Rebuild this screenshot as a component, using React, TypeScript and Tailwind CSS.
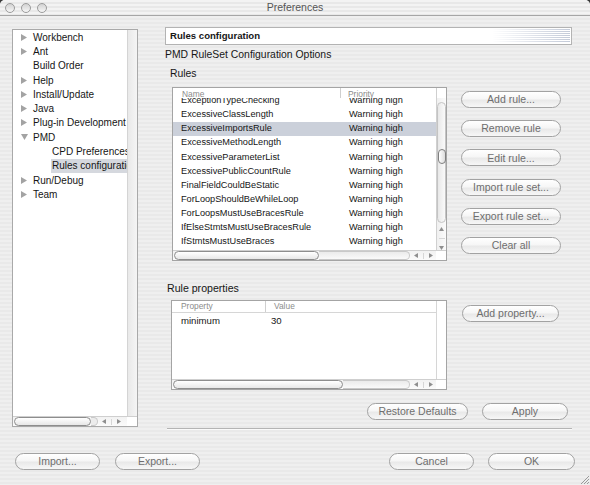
import React from 'react'

const RULES = [
  'ExceptionTypeChecking',
  'ExcessiveClassLength',
  'ExcessiveImportsRule',
  'ExcessiveMethodLength',
  'ExcessiveParameterList',
  'ExcessivePublicCountRule',
  'FinalFieldCouldBeStatic',
  'ForLoopShouldBeWhileLoop',
  'ForLoopsMustUseBracesRule',
  'IfElseStmtsMustUseBracesRule',
  'IfStmtsMustUseBraces',
]

type TreeItem = { label: string; arrow?: 'right' | 'down'; child?: boolean; selected?: boolean }

const TREE: TreeItem[] = [
  { label: 'Workbench', arrow: 'right' },
  { label: 'Ant', arrow: 'right' },
  { label: 'Build Order' },
  { label: 'Help', arrow: 'right' },
  { label: 'Install/Update', arrow: 'right' },
  { label: 'Java', arrow: 'right' },
  { label: 'Plug-in Development', arrow: 'right' },
  { label: 'PMD', arrow: 'down' },
  { label: 'CPD Preferences', child: true },
  { label: 'Rules configuration', child: true, selected: true },
  { label: 'Run/Debug', arrow: 'right' },
  { label: 'Team', arrow: 'right' },
]

function AquaButton({ label, className }: { label: string; className: string }) {
  return (
    <div
      className={`h-[17px] shrink-0 flex items-center justify-center rounded-full border border-[#a2a2a2] bg-[linear-gradient(to_bottom,#ffffff_0%,#f6f6f6_45%,#e9e9e9_55%,#f7f7f7_100%)] text-[10.5px] leading-none text-[#6e6e6e] ${className}`}
    >
      {label}
    </div>
  )
}

function TreeArrow({ dir }: { dir: 'right' | 'down' }) {
  return dir === 'right' ? (
    <svg width="6" height="7" viewBox="0 0 6 7">
      <polygon points="0,0 6,3.5 0,7" fill="#a3a3a3" />
    </svg>
  ) : (
    <svg width="7" height="6" viewBox="0 0 7 6">
      <polygon points="0,0 7,0 3.5,6" fill="#a3a3a3" />
    </svg>
  )
}

function ScrollArrowsH() {
  return (
    <div className="flex items-center gap-[5px] pl-[4px] pr-[3px]">
      <svg width="4" height="5" viewBox="0 0 4 5">
        <polygon points="4,0 0,2.5 4,5" fill="#8f8f8f" />
      </svg>
      <div className="w-px h-[6px] bg-[#d6d6d6]" />
      <svg width="4" height="5" viewBox="0 0 4 5">
        <polygon points="0,0 4,2.5 0,5" fill="#8f8f8f" />
      </svg>
    </div>
  )
}

function HScroll({ thumb, trackEnd }: { thumb: string; trackEnd: boolean }) {
  return (
    <div className="h-[10px] flex items-center bg-[linear-gradient(to_bottom,#f2f2f2,#fbfbfb)] border-t border-[#cfcfcf]">
      <div
        className={`h-[9px] ml-px rounded-full border border-[#8d8d8d] bg-[linear-gradient(to_bottom,#ffffff,#e7e7e7)] ${thumb}`}
      />
      {trackEnd ? (
        <div className="flex-1 h-[9px] rounded-r-full border-y border-r border-[#c9c9c9] bg-[linear-gradient(to_bottom,#ebebeb,#fafafa)]" />
      ) : (
        <div className="w-[7px] h-[9px] rounded-r-full border-y border-r border-[#c9c9c9] bg-[#ececec]" />
      )}
      <ScrollArrowsH />
    </div>
  )
}

function RulesVScroll() {
  return (
    <div className="w-[10px] flex flex-col items-center border-l border-[#d0d0d0] bg-[linear-gradient(to_right,#f0f0f0,#fbfbfb)]">
      <div className="mt-[4px] w-[9px] h-[121px] rounded-full border border-[#c4c4c4] bg-[linear-gradient(to_right,#e8e8e8,#fafafa)] flex flex-col items-center">
        <div className="mt-[46px] w-[8px] h-[15px] rounded-[4px] border border-[#7f7f7f] bg-[linear-gradient(to_right,#ffffff,#dcdcdc)]" />
      </div>
      <div className="mt-[4px] flex flex-col items-center gap-[7px]">
        <svg width="5" height="4" viewBox="0 0 5 4">
          <polygon points="0,4 2.5,0 5,4" fill="#8f8f8f" />
        </svg>
        <div className="w-[6px] h-px bg-[#d6d6d6]" />
        <svg width="5" height="4" viewBox="0 0 5 4">
          <polygon points="0,0 5,0 2.5,4" fill="#8f8f8f" />
        </svg>
      </div>
    </div>
  )
}

function TrafficLight() {
  return (
    <div className="w-[10px] h-[10px] rounded-full border border-[#9b9b9b] bg-[linear-gradient(to_bottom,#d2d2d2,#f6f6f6)]" />
  )
}

export default function App() {
  return (
    <div className="w-[590px] h-[485px] bg-[#3a3a3a]">
      <div className="relative w-[590px] h-[485px] flex flex-col overflow-hidden rounded-t-[5px] bg-[repeating-linear-gradient(to_bottom,#efefef_0px,#efefef_2px,#e9e9e9_2px,#e9e9e9_4px)] font-['Liberation_Sans',Arial,sans-serif] text-[#161616]">
        {/* Title bar */}
        <div className="h-[16px] shrink-0 flex items-center border-b border-[#a6a6a6] bg-[repeating-linear-gradient(to_bottom,#f3f3f3_0px,#f3f3f3_2px,#e8e8e8_2px,#e8e8e8_4px)]">
          <div className="w-[50px] flex gap-[6px] pl-[5px]">
            <TrafficLight />
            <TrafficLight />
            <TrafficLight />
          </div>
          <div className="flex-1 text-center text-[10.5px] leading-none text-[#555]">Preferences</div>
          <div className="w-[50px]" />
        </div>

        <div className="flex flex-1 min-h-0">
          {/* Left tree */}
          <div className="ml-[12px] mt-[13px] w-[126px] h-[398px] flex flex-col border border-[#a9a9a9] bg-white">
            <div className="flex flex-1 min-h-0">
              <div className="flex-1 min-w-0 overflow-hidden">
                {TREE.map((t) => (
                  <div key={t.label} className="h-[14.3px] flex items-center text-[10px] whitespace-nowrap">
                    {t.child ? (
                      <div
                        className={`ml-[38px] pl-[1px] flex-1 h-full flex items-center ${t.selected ? 'bg-[#d5d8de]' : ''}`}
                      >
                        {t.label}
                      </div>
                    ) : (
                      <>
                        <div className="w-[20px] pl-[8px] flex items-center">
                          {t.arrow && <TreeArrow dir={t.arrow} />}
                        </div>
                        <span>{t.label}</span>
                      </>
                    )}
                  </div>
                ))}
              </div>
              <div className="w-[10px] border-l border-[#d4d4d4] bg-[linear-gradient(to_right,#e9e9e9,#f5f5f5)]" />
            </div>
            <div className="flex">
              <div className="flex-1">
                <HScroll thumb="w-[77px]" trackEnd={false} />
              </div>
              <div className="w-[10px] h-[10px] border-t border-[#cfcfcf] bg-white" />
            </div>
          </div>

          {/* Right column */}
          <div className="ml-[27px] mt-[11px] w-[407px] flex flex-col">
            <div className="h-[18px] flex items-center border border-[#b3b3b3] bg-white">
              <span className="pl-[4px] text-[9.6px] font-bold">Rules configuration</span>
              <div className="ml-auto mr-px w-[78px] h-[14px] bg-[linear-gradient(to_right,#ffffff,rgba(255,255,255,0)),repeating-linear-gradient(to_bottom,#c3cad8_0px,#c3cad8_1px,#ffffff_1px,#ffffff_2px)]" />
            </div>

            <div className="mt-[3px] h-[14px] flex items-center text-[10.4px]">PMD RuleSet Configuration Options</div>

            <div className="mt-[5px] pl-[5px] h-[14px] flex items-center text-[10.4px]">Rules</div>

            <div className="mt-[6px] flex">
              <div className="ml-[7px] w-[275px] h-[174px] flex flex-col border border-[#a4a4a4] bg-white">
                <div className="flex flex-1 min-h-0">
                  <div className="flex-1 flex flex-col min-w-0">
                    <div className="h-[10px] shrink-0 flex text-[8.4px] leading-none text-[#8c8c8c] overflow-hidden">
                      <div className="w-[168px] pl-[9px] pt-[2px] border-r border-[#cfcfcf]">Name</div>
                      <div className="flex-1 pl-[7px] pt-[2px]">Priority</div>
                    </div>
                    <div className="flex-1 overflow-hidden">
                      <div className="-mt-[4px]">
                        {RULES.map((r) => (
                          <div
                            key={r}
                            className={`h-[14.1px] flex items-center text-[9.2px] whitespace-nowrap ${r === 'ExcessiveImportsRule' ? 'bg-[#cbd0da]' : ''}`}
                          >
                            <div className="w-[169px] pl-[8px]">{r}</div>
                            <div className="pl-[7px]">Warning high</div>
                          </div>
                        ))}
                      </div>
                    </div>
                  </div>
                  <div className="flex flex-col">
                    <div className="h-[10px] w-[10px] border-l border-[#cfcfcf]" />
                    <div className="flex-1 flex">
                      <RulesVScroll />
                    </div>
                  </div>
                </div>
                <div className="flex">
                  <div className="flex-1">
                    <HScroll thumb="w-[145px]" trackEnd={true} />
                  </div>
                  <div className="w-[10px] h-[10px] border-t border-[#cfcfcf] bg-white" />
                </div>
              </div>

              <div className="ml-[14px] mt-[4px] flex flex-col gap-[12.2px]">
                <AquaButton label="Add rule..." className="w-[100px]" />
                <AquaButton label="Remove rule" className="w-[100px]" />
                <AquaButton label="Edit rule..." className="w-[100px]" />
                <AquaButton label="Import rule set..." className="w-[100px]" />
                <AquaButton label="Export rule set..." className="w-[100px]" />
                <AquaButton label="Clear all" className="w-[100px]" />
              </div>
            </div>

            <div className="mt-[21px] pl-[2px] h-[14px] flex items-center text-[10.6px]">Rule properties</div>

            <div className="mt-[4px] flex">
              <div className="ml-[6px] w-[276px] h-[90px] flex flex-col border border-[#a4a4a4] bg-white">
                <div className="flex flex-1 min-h-0">
                  <div className="flex-1 flex flex-col min-w-0">
                    <div className="h-[12px] shrink-0 flex items-center text-[8.4px] text-[#8c8c8c] border-b border-[#d6d6d6]">
                      <div className="w-[94px] h-full flex items-center pl-[9px] border-r border-[#cfcfcf]">Property</div>
                      <div className="pl-[8px]">Value</div>
                    </div>
                    <div className="h-[16px] flex items-center text-[9.6px]">
                      <div className="w-[94px] pl-[9px]">minimum</div>
                      <div className="pl-[5px]">30</div>
                    </div>
                  </div>
                  <div className="w-[10px] border-l border-[#d6d6d6] bg-white" />
                </div>
                <div className="flex">
                  <div className="flex-1">
                    <HScroll thumb="w-[170px]" trackEnd={true} />
                  </div>
                  <div className="w-[10px] h-[10px] border-t border-[#cfcfcf] bg-white" />
                </div>
              </div>
              <AquaButton label="Add property..." className="ml-[15px] mt-[5px] w-[97px]" />
            </div>

            <div className="mt-[13px] flex justify-end pr-[4px] gap-[14px]">
              <AquaButton label="Restore Defaults" className="w-[101px]" />
              <AquaButton label="Apply" className="w-[86px]" />
            </div>

            <div className="mt-[8px] ml-[2px] h-px bg-[#b4b4b4] shadow-[0_1px_0_#fafafa]" />
          </div>
        </div>

        {/* Bottom buttons */}
        <div className="h-[45px] shrink-0 flex pt-[13px]">
          <AquaButton label="Import..." className="ml-[15px] w-[85px]" />
          <AquaButton label="Export..." className="ml-[15px] w-[85px]" />
          <div className="flex-1" />
          <AquaButton label="Cancel" className="w-[85px]" />
          <AquaButton label="OK" className="ml-[14px] mr-[15px] w-[87px]" />
        </div>

        {/* Resize grip */}
        <svg className="absolute right-[1px] bottom-[1px]" width="9" height="9" viewBox="0 0 9 9">
          <line x1="1" y1="9" x2="9" y2="1" stroke="#9a9a9a" strokeWidth="1" />
          <line x1="4" y1="9" x2="9" y2="4" stroke="#9a9a9a" strokeWidth="1" />
          <line x1="7" y1="9" x2="9" y2="7" stroke="#9a9a9a" strokeWidth="1" />
        </svg>
      </div>
    </div>
  )
}
